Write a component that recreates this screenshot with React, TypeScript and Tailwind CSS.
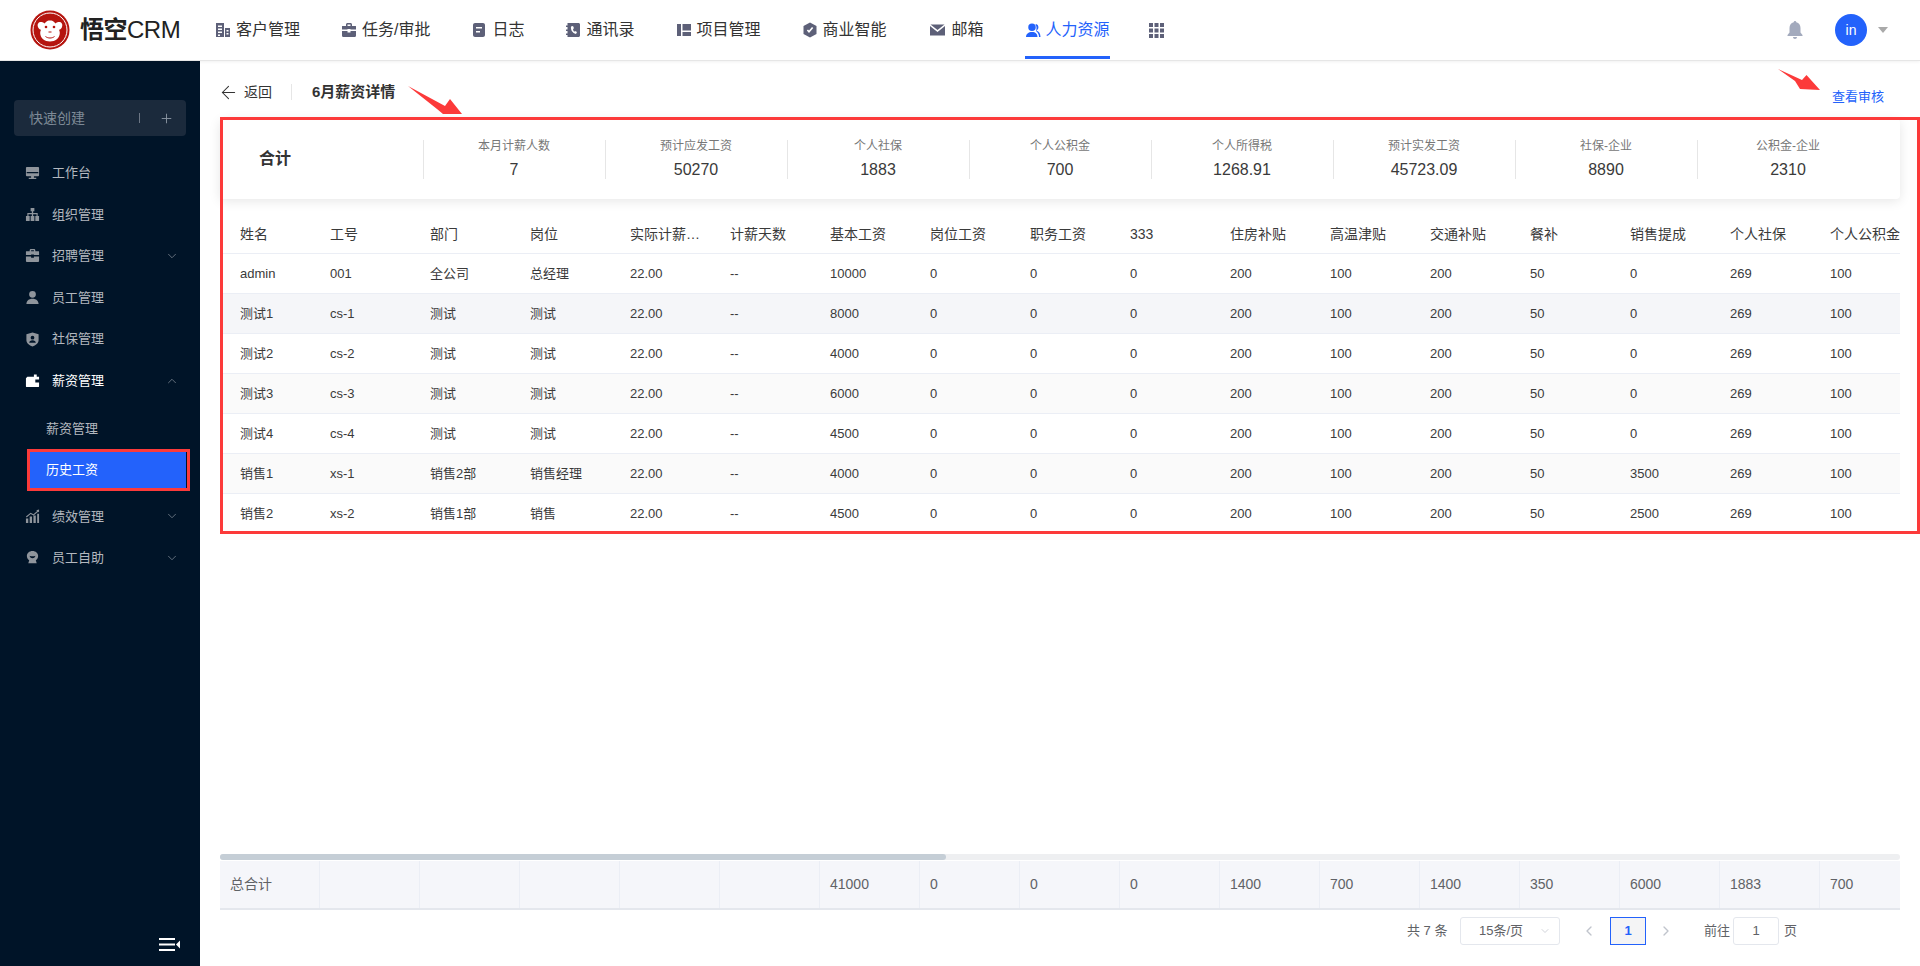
import { ReactNode } from "react"
import { ArrowLeft, ChevronDown, ChevronLeft, ChevronRight, ChevronUp, Plus } from "lucide-react"

const FONT = "font-['Liberation_Sans','Noto_Sans_CJK_SC',sans-serif]"

// Top bar icons
const icon = (children: ReactNode, className = "w-[16px] h-[16px]") => (
  <svg viewBox="0 0 16 16" fill="currentColor" className={`${className} shrink-0`}>
    {children}
  </svg>
)

const navItems = [
  {
    label: "客户管理",
    icon: icon(<path fillRule="evenodd" d="M1 1h8v14H1zM3 3.500v1.600h4V3.500zM3 6.500v1.600h4V6.500zM3 9.500v1.600h4V9.500zM3 12.500V14h2v-1.500zM10 6h5v9h-5zM11.500 8v1.500h2V8zM11.500 11v1.500h2V11z" />),
  },
  {
    label: "任务/审批",
    icon: icon(<path fillRule="evenodd" d="M5 4V2.500C5 1.700 5.700 1 6.500 1h3c.8 0 1.500.7 1.500 1.500V4h3.500c.5 0 .5.400.5 1v2.500H9.500V7h-3v.5H1V5c0-.6 0-1 .5-1zM6.500 2.500V4h3V2.500zM1 9h5.500v1.500h3V9H15v4.500c0 .8-.5 1.500-1.300 1.500H2.300C1.500 15 1 14.300 1 13.500z" />),
  },
  {
    label: "日志",
    icon: icon(<path fillRule="evenodd" d="M4 1h8c1 0 2 .8 2 2v10c0 1.200-1 2-2 2H4c-1 0-2-.8-2-2V3c0-1.200 1-2 2-2zM5 5v1.600h6V5zM5 9v1.600h4V9z" />),
  },
  {
    label: "通讯录",
    icon: icon(<path fillRule="evenodd" d="M2.500 1h11c.8 0 1.500.7 1.500 1.500v11c0 .8-.7 1.500-1.500 1.500h-11V13H1v-1.500h1.500V9H1V7.500h1.500V5H1V3.500h1.500zM6 4.500C5.500 8 7.500 11 11 12l1-2-2-1-.8.8C8.500 9 8 8 8 7l1-.7L8 4z" />),
  },
  {
    label: "项目管理",
    icon: icon(<path d="M1 2h4v12H1zM6.500 2H15v6.500H6.500zM6.500 10H15v4H6.500z" />),
  },
  {
    label: "商业智能",
    icon: icon(<path fillRule="evenodd" d="M8 .5l6.500 3.500v8L8 15.500 1.500 12V4zM4.800 8.500L7 11l4.300-5-1.300-1-3 3.500-1-1z" />),
  },
  {
    label: "邮箱",
    icon: icon(<path d="M1 2.500h14L8 8zM.5 4L8 10l7.500-6v9.500h-15z" />, "w-[19px] h-[16px]"),
  },
  {
    label: "人力资源",
    active: true,
    icon: icon(<path d="M7 1.500a3.500 3.500 0 1 1 0 7.500 3.500 3.500 0 0 1 0-7.500zM1 15c0-3 2.500-5 6-5s5.500 2 5.500 5zM11 2a3.500 3.500 0 0 1 .5 6.500C14 9.500 15.500 11.500 15.500 15H14c0-2.500-1-4.500-3-6 .8-1.500.8-5-.5-6.500z" />),
  },
]

const sideIcons: Record<string, ReactNode> = {
  monitor: <path fillRule="evenodd" d="M2 2h12c.6 0 1 .4 1 1v8c0 .6-.4 1-1 1H9.500v1.500H12V15H4v-1.500h2.500V12H2c-.6 0-1-.4-1-1V3c0-.6.4-1 1-1zM1.800 7.500v1.200h12.400V7.500z" />,
  org: <path d="M6 1h4v3.500H8.700V6.500H13.500V9.500H15V15H11V9.500H12.300V7.700H8.700V9.500H10V15H6V9.500H7.300V7.700H3.700V9.500H5V15H1V9.500H2.500V6.500H7.300V4.500H6z" />,
  bag: <path fillRule="evenodd" d="M5 3.500V2.300C5 1.500 5.700 1 6.500 1h3c.8 0 1.500.5 1.500 1.300v1.200h3.500c.5 0 .5.400.5 1v3H9.500V7h-3v.5H1v-3c0-.6 0-1 .5-1zM6.500 2.300v1.200h3V2.300zM1 9h5.500v1.500h3V9H15v4.500c0 .8-.5 1.500-1.300 1.500H2.300C1.500 15 1 14.300 1 13.500z" />,
  user: <path d="M8 1a3.600 3.600 0 1 1 0 7.200A3.600 3.600 0 0 1 8 1zM1.500 15c0-3.500 2.500-5.800 6.500-5.800s6.500 2.300 6.500 5.800z" />,
  shield: <path fillRule="evenodd" d="M8 .5l6.500 2v6.300c0 3-3 5.500-6.500 6.700-3.500-1.200-6.500-3.700-6.500-6.700V2.500zM8 4a2 2 0 1 0 0 4 2 2 0 0 0 0-4zM4.500 11.500h7c0-1.500-1.500-2.700-3.500-2.700s-3.500 1.200-3.500 2.700z" />,
  wallet: <path fillRule="evenodd" d="M9.500 1.500v2.500H2.500L1 5.500V14c0 .6.400 1 1 1h12c.6 0 1-.4 1-1V4h-2.500V1.500zM11 7h4v3h-4z" />,
  chart: <path d="M1 10h2.500v5H1zM5 8h2.500v7H5zM9 7h2.500v8H9zM13 5h2v10h-2zM1 8L6 4l3 1.500L13 2l-1-.8L15 .5v3l-1-.7-4.800 4L6 5.300 1.800 9z" />,
  badge: <path fillRule="evenodd" d="M8 1c3.500 0 6 2.300 6 5.300 0 2-1 3.500-2.500 4.500l1 3.200H3.500l1-3.200C3 9.800 2 8.300 2 6.300 2 3.300 4.500 1 8 1zM5 6c0 1.600 1.300 2.700 3 2.700S11 7.600 11 6c-1 .8-5 .8-6 0z" />,
}

const menuTop = [
  { label: "工作台", icon: "monitor" },
  { label: "组织管理", icon: "org" },
  { label: "招聘管理", icon: "bag", arrow: true },
  { label: "员工管理", icon: "user" },
  { label: "社保管理", icon: "shield" },
]

const summary = [
  ["本月计薪人数", "7"],
  ["预计应发工资", "50270"],
  ["个人社保", "1883"],
  ["个人公积金", "700"],
  ["个人所得税", "1268.91"],
  ["预计实发工资", "45723.09"],
  ["社保-企业", "8890"],
  ["公积金-企业", "2310"],
]

const columns = ["姓名", "工号", "部门", "岗位", "实际计薪天数", "计薪天数", "基本工资", "岗位工资", "职务工资", "333", "住房补贴", "高温津贴", "交通补贴", "餐补", "销售提成", "个人社保", "个人公积金"]

const people = [
  ["admin", "001", "全公司", "总经理", "10000", "0"],
  ["测试1", "cs-1", "测试", "测试", "8000", "0"],
  ["测试2", "cs-2", "测试", "测试", "4000", "0"],
  ["测试3", "cs-3", "测试", "测试", "6000", "0"],
  ["测试4", "cs-4", "测试", "测试", "4500", "0"],
  ["销售1", "xs-1", "销售2部", "销售经理", "4000", "3500"],
  ["销售2", "xs-2", "销售1部", "销售", "4500", "2500"],
]

const rowBg = ["", "bg-[#f5f6f9]", "", "bg-[#fafafa]", "", "bg-[#fafafa]", ""]

const totals = ["总合计", "", "", "", "", "", "41000", "0", "0", "0", "1400", "700", "1400", "350", "6000", "1883", "700"]

function Logo() {
  return (
    <svg viewBox="0 0 40 40" className="w-[40px] h-[40px] shrink-0">
      <circle cx="20" cy="20" r="19.500" fill="#b5150f" />
      <circle cx="20" cy="20" r="17" fill="none" stroke="#fff" strokeWidth="1" />
      <path fill="#fff" d="M8 17c-1-3 .5-5 3-5 1.500 0 2.500.5 3.500 1.500C16.500 11 18 10.500 20 10.500s3.500.5 5.500 3c1-1 2-1.500 3.500-1.500 2.500 0 4 2 3 5-.5 1.500-1.500 2.500-3 2.800.5 1 .8 2.200.8 3.200 0 5-4.500 8.500-9.800 8.500s-9.800-3.500-9.800-8.500c0-1 .3-2.200.8-3.200-1.500-.3-2.500-1.300-3-2.800z" />
      <circle cx="16" cy="17" r="1.300" fill="#b5150f" />
      <circle cx="24" cy="17" r="1.300" fill="#b5150f" />
      <path d="M15.500 26.500c2.500 2 6.500 2 9 0" fill="none" stroke="#b5150f" strokeWidth="1" />
      <path d="M18.500 22h3" fill="none" stroke="#b5150f" strokeWidth="1" />
    </svg>
  )
}

function TopBar() {
  return (
    <header className="h-[61px] shrink-0 flex items-center bg-white border-b border-[#e6e6e6] shadow-[0_1px_3px_rgba(0,0,0,0.06)] relative z-10">
      <div className="w-[215px] pl-[30px] flex items-center gap-[10px] shrink-0">
        <Logo />
        <span className="text-[24px] text-[#222] tracking-[-0.5px] whitespace-nowrap">
          <span className="font-bold">悟空</span>CRM
        </span>
      </div>
      <nav className="flex items-stretch h-full gap-[41px] text-[16px] text-[#333]">
        {navItems.map((item) => (
          <div
            key={item.label}
            className={`relative flex items-center gap-[5px] whitespace-nowrap ${item.active ? "text-[#2362fb]" : ""}`}
          >
            <span className={item.active ? "" : "text-[#5d6078]"}>{item.icon}</span>
            {item.label}
            {item.active && <span className="absolute left-0 right-0 bottom-[1px] h-[3px] bg-[#2362fb]" />}
          </div>
        ))}
        <div className="ml-[-2px] flex items-center text-[#5d6078]">
          <svg viewBox="0 0 15 15" fill="currentColor" className="w-[15px] h-[15px]">
            <path d="M0 0h4v4H0zM5.500 0h4v4h-4zM11 0h4v4h-4zM0 5.500h4v4H0zM5.500 5.500h4v4h-4zM11 5.500h4v4h-4zM0 11h4v4H0zM5.500 11h4v4h-4zM11 11h4v4h-4z" />
          </svg>
        </div>
      </nav>
      <div className="ml-auto flex items-center pr-[32px]">
        <svg viewBox="0 0 16 18" fill="#a3aabd" className="w-[16px] h-[18px]">
          <path d="M8 0c.8 0 1.300.6 1.300 1.300C12 2 13.500 4.300 13.500 7v4.500L15.500 14v1H.5v-1l2-2.500V7c0-2.700 1.500-5 4.200-5.700C6.700.6 7.200 0 8 0zM6 16h4c0 1.200-.9 2-2 2s-2-.8-2-2z" />
        </svg>
        <div className="ml-[32px] w-[32px] h-[32px] rounded-full bg-[#2362fb] text-white text-[14px] flex items-center justify-center">in</div>
        <span className="ml-[11px] w-0 h-0 border-x-[5px] border-x-transparent border-t-[6px] border-t-[#a9a9a9]" />
      </div>
    </header>
  )
}

function MenuRow({ label, iconName, arrow, active }: { label: string; iconName: string; arrow?: "up" | "down"; active?: boolean }) {
  return (
    <div className={`h-[41.6px] pl-[25px] pr-[21px] flex items-center text-[13px] ${active ? "text-white" : "text-[#b3b8bf]"}`}>
      <svg viewBox="0 0 16 16" fill="currentColor" className={`w-[15px] h-[15px] ${active ? "text-white" : "text-[#8f959c]"}`}>
        {sideIcons[iconName]}
      </svg>
      <span className="ml-[12px]">{label}</span>
      {arrow === "down" && <ChevronDown className="ml-auto w-[14px] h-[14px] text-[#6f7a87]" strokeWidth={1.5} />}
      {arrow === "up" && <ChevronUp className="ml-auto w-[14px] h-[14px] text-[#6f7a87]" strokeWidth={1.5} />}
    </div>
  )
}

function Sidebar() {
  return (
    <aside className="relative w-[200px] shrink-0 bg-[#001428] pt-[39px]">
      <div className="mx-[14px] h-[36px] rounded-[4px] bg-[#1b2a3c] flex items-center pl-[15px] text-[14px] text-[#7f8a97]">
        快速创建
        <span className="ml-[54px] w-px h-[10px] bg-[#6c7684]" />
        <Plus className="ml-[19px] w-[15px] h-[15px] text-[#8a94a1]" strokeWidth={1.5} />
      </div>
      <div className="mt-[16px]">
        {menuTop.map((m) => (
          <MenuRow key={m.label} label={m.label} iconName={m.icon} arrow={m.arrow ? "down" : undefined} />
        ))}
        <MenuRow label="薪资管理" iconName="wallet" arrow="up" active />
        <div className="mt-[9px] ml-[30px] w-[156px] text-[13px] flex flex-col gap-[5px]">
          <div className="h-[36px] pl-[16px] flex items-center text-[#b3b8bf]">薪资管理</div>
          <div className="h-[36px] pl-[16px] flex items-center text-white bg-[#2362fb]">历史工资</div>
        </div>
        <div className="mt-[8px]">
          <MenuRow label="绩效管理" iconName="chart" arrow="down" />
          <MenuRow label="员工自助" iconName="badge" arrow="down" />
        </div>
      </div>
      <svg viewBox="0 0 21 13" fill="#fff" className="absolute left-[159px] bottom-[15px] w-[21px] h-[13px]">
        <path d="M0 0h16v2H0zM0 5.500h16v2H0zM0 11h16v2H0zM21 2.500v8l-4-4z" />
      </svg>
    </aside>
  )
}

function SummaryCard() {
  return (
    <div className="h-[80px] flex items-center rounded-[4px] bg-white shadow-[0_2px_12px_rgba(0,0,0,0.1)]">
      <div className="w-[202.5px] pl-[39px] text-[16px] font-bold text-[#333]">合计</div>
      {summary.map(([label, value]) => (
        <div key={label} className="w-[182px] h-[39px] border-l border-[#e6e6e6] flex flex-col items-center justify-between">
          <div className="text-[12px] leading-[13px] text-[#777]">{label}</div>
          <div className="text-[16px] leading-[18px] text-[#3a3a3a]">{value}</div>
        </div>
      ))}
    </div>
  )
}

function Cell({ children, first }: { children?: ReactNode; first?: boolean }) {
  return (
    <div className={`w-[100px] shrink-0 pr-[10px] truncate ${first ? "pl-[20px]" : "pl-[10px]"}`}>
      {children}
    </div>
  )
}

function SalaryTable() {
  return (
    <div className="mt-[15px] overflow-hidden">
      <div className="flex h-[40px] pt-px items-center border-b border-[#ebeef5] text-[14px] text-[#3a3a3a]">
        {columns.map((c, i) => (
          <Cell key={c} first={i === 0}>{c}</Cell>
        ))}
      </div>
      {people.map((p, r) => {
        const cells = [p[0], p[1], p[2], p[3], "22.00", "--", p[4], "0", "0", "0", "200", "100", "200", "50", p[5], "269", "100"]
        return (
          <div key={p[0]} className={`flex h-[40px] pt-px items-center border-b border-[#ebeef5] text-[13px] text-[#3a3a3a] ${rowBg[r]}`}>
            {cells.map((v, i) => (
              <Cell key={i} first={i === 0}>{v}</Cell>
            ))}
          </div>
        )
      })}
    </div>
  )
}

function Pagination() {
  return (
    <div className="mt-[7px] h-[28px] flex items-center pl-[1187px] text-[13px] text-[#606266] whitespace-nowrap">
      <span className="w-[53px]">共 7 条</span>
      <div className="w-[100px] h-[28px] border border-[#e4e7ed] rounded-[3px] flex items-center pl-[18px] pr-[8px]">
        15条/页
        <ChevronDown className="ml-auto w-[12px] h-[12px] text-[#c0c4cc]" strokeWidth={1.5} />
      </div>
      <ChevronLeft className="ml-[21px] w-[16px] h-[16px] text-[#c0c4cc]" strokeWidth={2} />
      <div className="ml-[13px] w-[36px] h-[28px] border border-[#2362fb] bg-[#f4f4f5] text-[#2362fb] font-bold flex items-center justify-center">1</div>
      <ChevronRight className="ml-[12px] w-[16px] h-[16px] text-[#c0c4cc]" strokeWidth={2} />
      <span className="ml-[30px]">前往</span>
      <div className="ml-[3px] w-[46px] h-[28px] border border-[#e4e7ed] rounded-[3px] flex items-center justify-center">1</div>
      <span className="ml-[5px]">页</span>
    </div>
  )
}

export default function App() {
  return (
    <div className={`relative w-[1920px] h-[966px] overflow-hidden flex flex-col bg-white ${FONT}`}>
      <TopBar />
      <div className="flex-1 flex min-h-0">
        <Sidebar />
        <main className="flex-1 min-w-0 px-[20px] flex flex-col">
          <div className="h-[58px] flex items-start justify-between">
            <div className="mt-[23px] flex items-center h-[16px] text-[14px] text-[#333]">
              <ArrowLeft className="ml-[-2px] w-[21px] h-[21px] shrink-0" strokeWidth={1.2} />
              <span className="ml-[5px]">返回</span>
              <span className="ml-[19px] w-px h-[16px] bg-[#e6e6e6]" />
              <span className="ml-[20px] text-[15px] font-bold">6月薪资详情</span>
            </div>
            <a className="mt-[28px] mr-[16px] text-[13px] leading-[16px] text-[#2362fb]">查看审核</a>
          </div>
          <SummaryCard />
          <SalaryTable />
          <div className="mt-auto h-[6px] bg-[#eeeff1] rounded-[3px]">
            <div className="w-[726px] h-full rounded-[3px] bg-[#c5ced6]" />
          </div>
          <div className="mt-px h-[49px] flex overflow-hidden items-stretch bg-[#f5f6fa] border-b-2 border-[#e4e7ed] text-[14px] text-[#606266]">
            {totals.map((t, i) => (
              <div key={i} className="w-[100px] shrink-0 pl-[10px] flex items-center border-r border-[#ebeef5]">{t}</div>
            ))}
          </div>
          <Pagination />
          <div className="h-[21px]" />
        </main>
      </div>

      {/* red annotations drawn on the screenshot */}
      <div className="absolute left-[220px] top-[117px] w-[1700px] h-[417px] border-[3px] border-[#fc3a3a]" />
      <div className="absolute left-[27px] top-[449px] w-[163px] h-[42px] border-[3px] border-[#fc3a3a]" />
      <svg viewBox="0 0 56 30" fill="#fc3a3a" className="absolute left-[407px] top-[86px] w-[56px] h-[30px]">
        <path d="M1 0L38 20L43 13L55 28H36L30 23Z" />
      </svg>
      <svg viewBox="0 0 44 23" fill="#fc3a3a" className="absolute left-[1777px] top-[68px] w-[44px] h-[23px]">
        <path d="M1 1L25 12L29.500 7L43 22L23 21L18 13Z" />
      </svg>
    </div>
  )
}
